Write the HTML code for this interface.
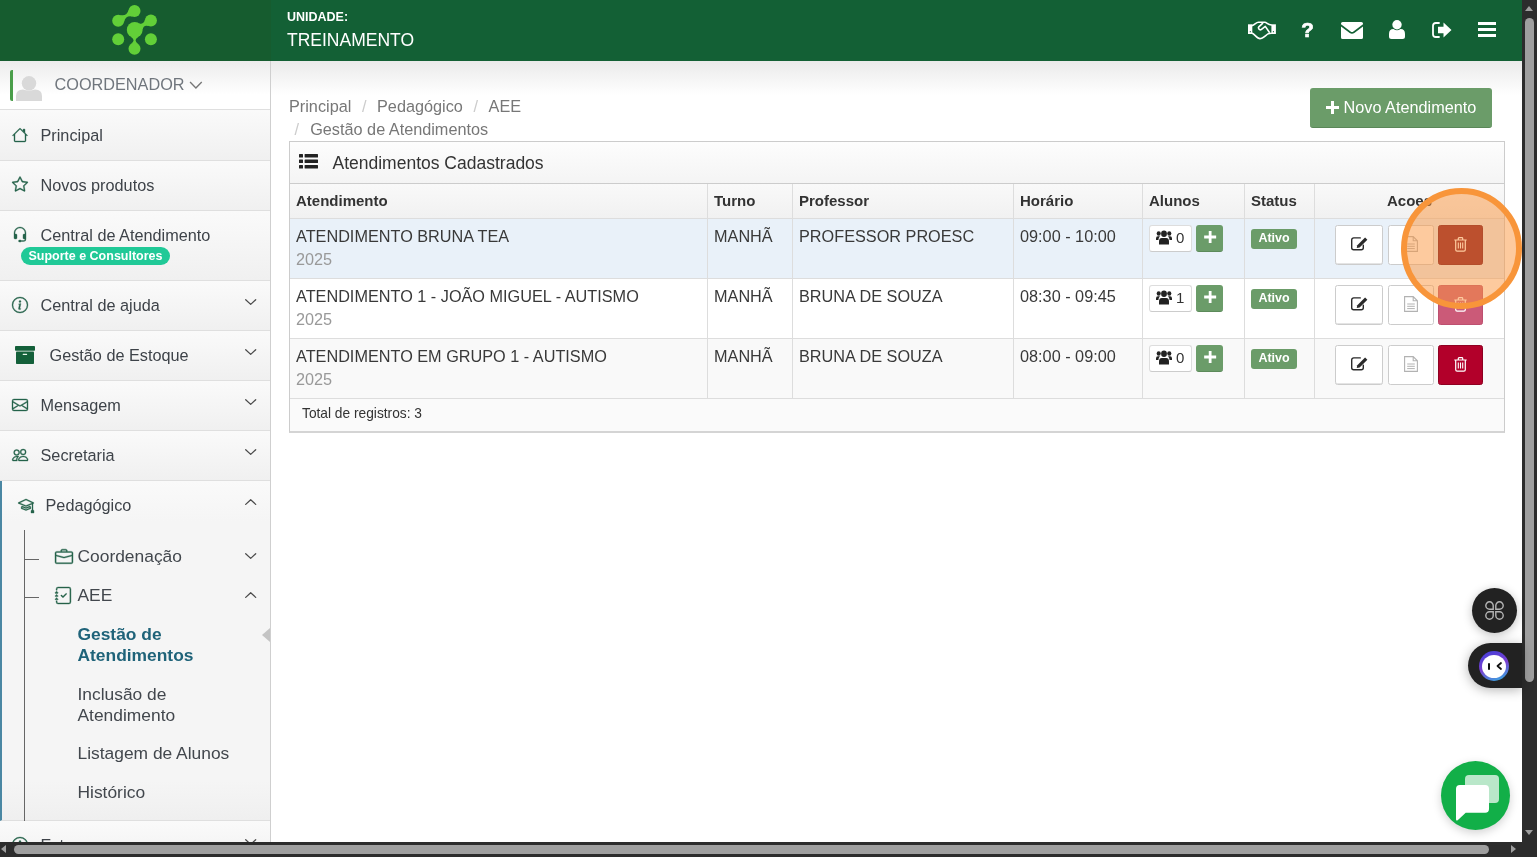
<!DOCTYPE html>
<html lang="pt-BR">
<head>
<meta charset="utf-8">
<title>Gestão de Atendimentos</title>
<style>
*{box-sizing:border-box;}
html,body{margin:0;padding:0;}
body{will-change:transform;width:1537px;height:857px;overflow:hidden;position:relative;background:#fff;font-family:"Liberation Sans",sans-serif;font-size:16.25px;color:#393939;}
.abs{position:absolute;}
svg{display:block;overflow:visible;}
/* header */
#hdr{position:absolute;left:0;top:0;width:1522px;height:61px;background:#136035;}
#logo{position:absolute;left:0;top:0;width:271px;height:61px;background:#165c2f;}
#unit{position:absolute;left:287px;top:10px;color:#fff;}
#unit .l1{font-size:12.5px;font-weight:bold;line-height:14px;}
#unit .l2{font-size:17.5px;line-height:20px;margin-top:6px;}
.hi{position:absolute;fill:#fff;}
/* sidebar */
#side{position:absolute;left:0;top:61px;width:271px;height:781px;background:#f5f5f5;border-right:1px solid #cfcfcf;overflow:hidden;}
.row{position:absolute;left:0;width:270px;border-bottom:1px solid #dfdfdf;background:linear-gradient(#fafafa,#f0f0f0);}
.row .t{position:absolute;left:40.5px;top:-1px;font-size:16.25px;line-height:50px;color:#3e4349;white-space:nowrap;}
.row .ic{position:absolute;left:12px;top:16px;width:17px;height:17px;}
.chev{position:absolute;left:245px;width:11px;height:7px;}
.sub{position:absolute;left:77.5px;font-size:17.4px;line-height:21px;color:#42474d;white-space:nowrap;}
/* main */
#main{position:absolute;left:271px;top:61px;width:1251px;height:781px;background:#fff;overflow:hidden;}
#topgrad{position:absolute;left:0;top:0;width:1251px;height:34px;background:linear-gradient(#eaeaea,#fff);}
.bc{position:absolute;font-size:16.25px;color:#777;white-space:nowrap;line-height:23px;}
.bc i{font-style:normal;color:#ccc;display:inline-block;width:25.7px;text-align:center;}

/* panel */
#panel{position:absolute;left:18px;top:80px;width:1216px;height:292px;border:1px solid #ccc;border-bottom:2px solid #d4d4d4;background:#fafafa;}
#phead{position:absolute;left:0;top:0;width:1214px;height:42px;background:linear-gradient(#fdfdfd,#f4f4f4);border-bottom:1px solid #ccc;}
#phead .tt{position:absolute;left:42.5px;top:1px;line-height:41px;font-size:17.5px;color:#333;}
table{position:absolute;left:0;top:42px;width:1214px;border-collapse:separate;border-spacing:0;table-layout:fixed;}
th{height:35px;padding:0 0 2px 6px;text-align:left;font-size:15px;font-weight:bold;color:#333;border-right:1px solid #ddd;border-bottom:1px solid #ddd;background:linear-gradient(#f9f9f9,#f1f1f1);}
td{height:60px;padding:6px 0 0 6px;vertical-align:top;font-size:16.25px;line-height:23px;color:#393939;border-right:1px solid #ddd;border-bottom:1px solid #ddd;white-space:nowrap;position:relative;}
th:last-child,td:last-child{border-right:none;}
tr.r1 td{background:#e9f1f9;}
tr.r2 td{background:#fff;}
tr.r3 td{background:#f9f9f9;}
td .yr{color:#999;}
.bcount{position:absolute;left:6px;top:6px;width:43px;height:27px;border:1px solid #ddd;border-bottom-color:#ccc;border-radius:3px;background:#fff;font-size:15px;line-height:25px;color:#333;}
.bcount span{position:absolute;left:26px;top:-1px;}
.bplus{position:absolute;left:53px;top:6px;width:27px;height:27px;border-radius:3px;background:#6b9c69;border-bottom:1px solid #5c8a5a;}
.ativo{position:absolute;left:6px;top:10px;width:46px;height:20px;border-radius:3px;background:#6b9c69;color:#fff;font-weight:bold;font-size:12.5px;line-height:19px;text-align:center;}
.ab{position:absolute;top:6px;height:40px;border-radius:2.5px;}
.ab.d{border:1px solid #ddd;border-bottom-color:#d6d6d6;}
.ab.w{background:#fff;border:1px solid #ccc;box-shadow:inset 0 -1px 0 #e4e4e4;}
#pfoot{position:absolute;left:0;top:257px;width:1214px;height:32px;font-size:13.75px;line-height:30px;color:#333;padding-left:12px;background:#fafafa;}
#novo{position:absolute;left:1039px;top:27px;width:182px;height:40px;background:#6b9c69;border-radius:3px;border-bottom:1px solid #5a8758;color:#fff;font-size:16.25px;line-height:39px;}
#novo span{position:absolute;left:33.5px;top:0;white-space:nowrap;}
#vsb{position:absolute;left:1522px;top:0;width:15px;height:857px;background:#2c2c2c;}
#hsb{position:absolute;left:0;top:842px;width:1537px;height:15px;background:#2c2c2c;}
</style>
</head>
<body>
<!-- HEADER -->
<div id="hdr"><div id="logo">
<svg class="abs" style="left:100px;top:0" width="70" height="61" viewBox="0 0 70 61"><g fill="#62cf38"><circle cx="34.5" cy="11.0" r="6.0"/><circle cx="18.2" cy="20.7" r="6.0"/><circle cx="50.9" cy="20.5" r="6.0"/><circle cx="34.7" cy="29.9" r="7.9"/><circle cx="18.2" cy="39.2" r="6.0"/><circle cx="50.9" cy="39.2" r="6.0"/><circle cx="34.5" cy="48.8" r="6.0"/><path d="M32.53 16.67 Q25.91 15.11 24.12 21.67 L20.17 15.03 Q26.79 16.59 28.58 10.03Z M38.80 23.14 Q43.82 25.06 44.97 19.56 L48.78 26.11 Q43.43 24.39 42.60 29.70Z M38.06 37.05 Q33.15 40.28 37.99 43.92 L31.12 43.85 Q36.03 40.32 31.19 36.98Z"/></g></svg>
</div>

<!-- header icons -->
<svg class="hi" style="left:1248px;top:21px" width="28" height="19" viewBox="0 0 28 19"><g fill="none" stroke="#fff" stroke-width="1.6" stroke-linejoin="round" stroke-linecap="round"><path d="M4.2 4.6 C6.5 4 8.2 1.3 10.4 1.3 H16.8 C18.8 1.3 19.8 4 23.4 4"/><path d="M4.2 12.3 C6.5 13 9 17.6 11.9 17.6 C14.5 17.6 17.5 14.5 20 12.9 C21 12.4 22 12.3 23.4 12.3"/><path d="M14.6 2.3 L10.8 5.9 C9.6 7.2 11.4 9.5 13.2 8.6 L17.3 5.4 L21.3 11.2"/></g><rect x="0" y="3.3" width="4.3" height="9.7"/><rect x="23.4" y="3.3" width="4.5" height="9.7"/><circle cx="2.3" cy="10.7" r=".6" fill="#136035"/><circle cx="25.4" cy="10.7" r=".6" fill="#136035"/></svg>
<div class="abs" style="left:1300px;top:17.5px;width:15px;text-align:center;color:#fff;font-weight:bold;font-size:20.5px;line-height:24px;-webkit-text-stroke:.7px #fff">?</div>
<svg class="hi" style="left:1341px;top:22px" width="22" height="17" viewBox="0 0 22 17"><path d="M0 1.6 q0-1.6 1.6-1.6 h18.8 q1.6 0 1.6 1.6 v.7 l-9.6 7.3 q-1.4 1-2.8 0 l-9.6-7.3z"/><path d="M0 4.6 l8.7 6.5 q2.3 1.5 4.6 0 l8.7-6.5 v10.8 q0 1.6-1.6 1.6 h-18.8 q-1.6 0-1.6-1.6z"/></svg>
<svg class="hi" style="left:1389px;top:20px" width="16" height="19" viewBox="0 0 16 19"><circle cx="8" cy="4.7" r="4.7"/><path d="M0 16.5 v-2.5 q0-5 4.5-5 q1.7 1.2 3.5 1.2 q1.8 0 3.5-1.2 q4.5 0 4.5 5 v2.5 q0 2.5-2.5 2.5 h-11 q-2.5 0-2.5-2.5z"/></svg>
<svg class="hi" style="left:1432px;top:22px" width="20" height="16" viewBox="0 0 20 16"><path d="M7 1 h-3.2 q-2.8 0-2.8 2.8 v8.4 q0 2.8 2.8 2.8 h3.2" fill="none" stroke="#fff" stroke-width="1.8" stroke-linecap="round"/><path d="M6 4.8 h5.5 v-4.2 l8 7.4 l-8 7.4 v-4.2 h-5.5z"/></svg>
<div class="abs" style="left:1478px;top:22px;width:18px;height:3px;background:#fff"></div>
<div class="abs" style="left:1478px;top:28px;width:18px;height:3px;background:#fff"></div>
<div class="abs" style="left:1478px;top:34px;width:18px;height:3px;background:#fff"></div>
<div id="unit"><div class="l1">UNIDADE:</div><div class="l2">TREINAMENTO</div></div>
</div>

<!-- SIDEBAR -->
<div id="side">
 <div class="row" style="top:0;height:49px;background:linear-gradient(#ececec,#fff 70%);">
  <div class="abs" style="left:10px;top:9px;width:3px;height:31px;background:#4a9e4a;border-radius:2px 0 0 2px"></div>
  <svg class="abs" style="left:16px;top:15px" width="26" height="25" viewBox="0 0 26 25"><circle cx="13" cy="7.3" r="7.2" fill="#d9d9d9"/><path d="M0 25 v-5 q0-6.5 7-6.5 q6 2 12 0 q7 0 7 6.5 v5z" fill="#d9d9d9"/></svg>
  <div class="abs" style="left:54.5px;top:0;line-height:47px;font-size:16.25px;color:#70767d">COORDENADOR</div>
  <svg class="chev" style="left:188.8px;top:19.5px;width:13.8px;height:8.5px" viewBox="0 0 13 8"><path d="M1 1 L6.5 6.5 L12 1" fill="none" stroke="#777" stroke-width="1.3"/></svg>
 </div>
 <div class="row" style="top:49px;height:51px"><svg class="abs" style="left:12px;top:17px" width="16" height="16" viewBox="0 0 16 16" fill="#25634a" stroke="#25634a" stroke-width=".35"><path fill-rule="evenodd" d="M2 13.5V7h1v6.5a.5.5 0 0 0 .5.5h9a.5.5 0 0 0 .5-.5V7h1v6.5a1.5 1.5 0 0 1-1.5 1.5h-9A1.5 1.5 0 0 1 2 13.5zm11-11V6l-2-2V2.5a.5.5 0 0 1 .5-.5h1a.5.5 0 0 1 .5.5z"/><path fill-rule="evenodd" d="M7.293 1.5a1 1 0 0 1 1.414 0l6.647 6.646a.5.5 0 0 1-.708.708L8 2.207 1.354 8.854a.5.5 0 1 1-.708-.708L7.293 1.5z"/></svg><div class="t" style="top:0">Principal</div></div>
 <div class="row" style="top:100px;height:50px"><svg class="abs" style="left:12px;top:15.2px" width="16" height="16" viewBox="0 0 16 16" fill="#25634a" stroke="#25634a" stroke-width=".35"><path d="M2.866 14.85c-.078.444.36.791.746.593l4.39-2.256 4.389 2.256c.386.198.824-.149.746-.592l-.83-4.73 3.522-3.356c.33-.314.16-.888-.282-.95l-4.898-.696L8.465.792a.513.513 0 0 0-.927 0L5.354 5.12l-4.898.696c-.441.062-.612.636-.283.95l3.523 3.356-.83 4.73zm4.905-2.767-3.686 1.894.694-3.957a.565.565 0 0 0-.163-.505L1.71 6.745l4.052-.576a.525.525 0 0 0 .393-.288L8 2.223l1.847 3.658a.525.525 0 0 0 .393.288l4.052.575-2.906 2.77a.565.565 0 0 0-.163.506l.694 3.957-3.686-1.894a.503.503 0 0 0-.461 0z"/></svg><div class="t">Novos produtos</div></div>
 <div class="row" style="top:150px;height:70px"><svg class="abs" style="left:11.5px;top:16px" width="16" height="16" viewBox="0 0 16 16" fill="#25634a" stroke="#25634a" stroke-width=".35"><path d="M8 1a5 5 0 0 0-5 5v1h1a1 1 0 0 1 1 1v3a1 1 0 0 1-1 1H3a1 1 0 0 1-1-1V6a6 6 0 1 1 12 0v6a2.5 2.5 0 0 1-2.5 2.5H9.366a1 1 0 0 1-.866.5h-1a1 1 0 1 1 0-2h1a1 1 0 0 1 .866.5H11.5A1.5 1.5 0 0 0 13 12h-1a1 1 0 0 1-1-1V8a1 1 0 0 1 1-1h1V6a5 5 0 0 0-5-5z"/></svg><div class="t">Central de Atendimento</div>
   <div class="abs" style="left:21px;top:36px;width:149px;height:18px;border-radius:9px;background:#20c997;color:#fff;font-weight:bold;font-size:12.5px;line-height:18px;text-align:center">Suporte e Consultores</div></div>
 <div class="row" style="top:220px;height:50px"><svg class="abs" style="left:12.3px;top:16px" width="16" height="16" viewBox="0 0 16 16" fill="#25634a" stroke="#25634a" stroke-width=".35"><path d="M8 15A7 7 0 1 1 8 1a7 7 0 0 1 0 14zm0 1A8 8 0 1 0 8 0a8 8 0 0 0 0 16z"/><path d="m8.93 6.588-2.29.287-.082.38.45.083c.294.07.352.176.288.469l-.738 3.468c-.194.897.105 1.319.808 1.319.545 0 1.178-.252 1.465-.598l.088-.416c-.2.176-.492.246-.686.246-.275 0-.375-.193-.304-.533L8.93 6.588zM9 4.5a1 1 0 1 1-2 0 1 1 0 0 1 2 0z"/></svg><div class="t">Central de ajuda</div><svg class="abs" style="left:244.6px;top:17.9px" width="11.4" height="6.1" viewBox="0 0 11.4 6.1"><path d="M.7 .7 L5.7 5.4 L10.7 .7" fill="none" stroke="#4a4a4a" stroke-width="1.25" stroke-linecap="round" stroke-linejoin="round"/></svg></div>
 <div class="row" style="top:270px;height:50px"><svg class="abs" style="left:15px;top:15px" width="20" height="18" viewBox="0 0 20 18"><rect x="0" y="0" width="20" height="4.7" rx=".8" fill="#14603a"/><rect x="1" y="5.6" width="18" height="12.4" rx=".8" fill="#14603a"/><rect x="7.7" y="7.8" width="4.4" height="1.2" rx=".5" fill="#e8f5ea"/></svg><div class="t" style="left:49.5px">Gestão de Estoque</div><svg class="abs" style="left:244.6px;top:17.9px" width="11.4" height="6.1" viewBox="0 0 11.4 6.1"><path d="M.7 .7 L5.7 5.4 L10.7 .7" fill="none" stroke="#4a4a4a" stroke-width="1.25" stroke-linecap="round" stroke-linejoin="round"/></svg></div>
 <div class="row" style="top:320px;height:50px"><svg class="abs" style="left:12.2px;top:16.2px" width="16" height="16" viewBox="0 0 16 16" fill="#25634a" stroke="#25634a" stroke-width=".35"><path d="M0 4a2 2 0 0 1 2-2h12a2 2 0 0 1 2 2v8a2 2 0 0 1-2 2H2a2 2 0 0 1-2-2V4Zm2-1a1 1 0 0 0-1 1v.217l7 4.2 7-4.2V4a1 1 0 0 0-1-1H2Zm13 2.383-4.708 2.825L15 11.105V5.383Zm-.034 6.876-5.64-3.471L8 9.583l-1.326-.795-5.64 3.47A1 1 0 0 0 2 13h12a1 1 0 0 0 .966-.741ZM1 11.105l4.708-2.897L1 5.383v5.722Z"/></svg><div class="t">Mensagem</div><svg class="abs" style="left:244.6px;top:17.9px" width="11.4" height="6.1" viewBox="0 0 11.4 6.1"><path d="M.7 .7 L5.7 5.4 L10.7 .7" fill="none" stroke="#4a4a4a" stroke-width="1.25" stroke-linecap="round" stroke-linejoin="round"/></svg></div>
 <div class="row" style="top:370px;height:50px"><svg class="abs" style="left:12.2px;top:15.7px" width="16.3" height="16" viewBox="0 0 16 16" fill="#25634a" stroke="#25634a" stroke-width=".35"><path d="M15 14s1 0 1-1-1-4-5-4-5 3-5 4 1 1 1 1h8zm-7.978-1A.261.261 0 0 1 7 12.996c.001-.264.167-1.03.76-1.72C8.312 10.629 9.282 10 11 10c1.717 0 2.687.63 3.24 1.276.593.69.758 1.457.76 1.72l-.008.002a.274.274 0 0 1-.014.002H7.022zM11 7a2 2 0 1 0 0-4 2 2 0 0 0 0 4zm3-2a3 3 0 1 1-6 0 3 3 0 0 1 6 0zM6.936 9.28a5.88 5.88 0 0 0-1.23-.247A7.35 7.35 0 0 0 5 9c-4 0-5 3-5 4 0 .667.333 1 1 1h4.216A2.238 2.238 0 0 1 5 13c0-1.01.377-2.042 1.09-2.904.243-.294.526-.569.846-.816zM4.92 10A5.493 5.493 0 0 0 4 13H1c0-.26.164-1.03.76-1.724.545-.636 1.492-1.256 3.16-1.275zM1.5 5.5a3 3 0 1 1 6 0 3 3 0 0 1-6 0zm3-2a2 2 0 1 0 0 4 2 2 0 0 0 0-4z"/></svg><div class="t">Secretaria</div><svg class="abs" style="left:244.6px;top:17.9px" width="11.4" height="6.1" viewBox="0 0 11.4 6.1"><path d="M.7 .7 L5.7 5.4 L10.7 .7" fill="none" stroke="#4a4a4a" stroke-width="1.25" stroke-linecap="round" stroke-linejoin="round"/></svg></div>
 <div class="row" style="top:420px;height:340px;background:linear-gradient(#fafafa,#f5f5f5 40px,#f5f5f5 300px,#efefef);border-left:2px solid #4a87a3">
   <svg class="abs" style="left:15.8px;top:16.2px" width="16" height="16" viewBox="0 0 16 16" fill="#25634a" stroke="#25634a" stroke-width=".35"><path d="M8.211 2.047a.5.5 0 0 0-.422 0l-7.5 3.5a.5.5 0 0 0 .025.917l7.5 3a.5.5 0 0 0 .372 0L14 7.14V13a1 1 0 0 0-1 1v2h3v-2a1 1 0 0 0-1-1V6.739l.686-.275a.5.5 0 0 0 .025-.917l-7.5-3.5ZM8 8.460 1.758 5.965 8 3.052l6.242 2.913L8 8.460Z"/><path d="M4.176 9.032a.5.5 0 0 0-.656.327l-.5 1.7a.5.5 0 0 0 .294.605l4.5 1.8a.5.5 0 0 0 .372 0l4.5-1.8a.5.5 0 0 0 .294-.605l-.5-1.7a.5.5 0 0 0-.656-.327L8 10.466 4.176 9.032Zm-.068 1.873.22-.748 3.496 1.311a.5.5 0 0 0 .352 0l3.496-1.311.22.748L8 12.460l-3.892-1.556Z"/></svg><div class="t" style="left:43.5px">Pedagógico</div><svg class="abs" style="left:242.6px;top:17.9px" width="11.4" height="6.1" viewBox="0 0 11.4 6.1"><path d="M.7 5.4 L5.7 .7 L10.7 5.400" fill="none" stroke="#4a4a4a" stroke-width="1.25" stroke-linecap="round" stroke-linejoin="round"/></svg>
   <div class="abs" style="left:22px;top:49px;width:1px;height:291px;background:#666"></div>
   <div class="abs" style="left:22px;top:78px;width:15px;height:1px;background:#666"></div>
   <div class="abs" style="left:22px;top:116px;width:15px;height:1px;background:#666"></div>
   <svg class="abs" style="left:52.5px;top:66.5px" width="18" height="18" viewBox="0 0 16 16" fill="#25634a" stroke="#25634a" stroke-width=".35"><path d="M6.5 1A1.5 1.5 0 0 0 5 2.5V3H1.5A1.5 1.5 0 0 0 0 4.5v8A1.5 1.5 0 0 0 1.5 14h13a1.5 1.5 0 0 0 1.5-1.5v-8A1.5 1.5 0 0 0 14.5 3H11v-.5A1.5 1.5 0 0 0 9.5 1h-3zm0 1h3a.5.5 0 0 1 .5.5V3H6v-.5a.5.5 0 0 1 .5-.5zm1.886 6.914L15 7.151V12.5a.5.5 0 0 1-.5.5h-13a.5.5 0 0 1-.5-.5V7.150l6.614 1.764a1.5 1.5 0 0 0 .772 0zM1.5 4h13a.5.5 0 0 1 .5.5v1.616L8.129 7.948a.5.5 0 0 1-.258 0L1 6.116V4.5a.5.5 0 0 1 .5-.5z"/></svg><div class="sub" style="left:75.5px;top:65px">Coordenação</div><svg class="abs" style="left:242.6px;top:72.0px" width="11.4" height="6.1" viewBox="0 0 11.4 6.1"><path d="M.7 .7 L5.7 5.4 L10.7 .7" fill="none" stroke="#4a4a4a" stroke-width="1.25" stroke-linecap="round" stroke-linejoin="round"/></svg>
   <svg class="abs" style="left:52.5px;top:106px" width="17" height="17" viewBox="0 0 16 16" fill="#25634a" stroke="#25634a" stroke-width=".35"><path fill-rule="evenodd" d="M10.854 6.146a.5.5 0 0 1 0 .708l-3 3a.5.5 0 0 1-.708 0l-1.5-1.5a.5.5 0 1 1 .708-.708L7.5 8.793l2.646-2.647a.5.5 0 0 1 .708 0z"/><path d="M3 0h10a2 2 0 0 1 2 2v12a2 2 0 0 1-2 2H3a2 2 0 0 1-2-2v-1h1v1a1 1 0 0 0 1 1h10a1 1 0 0 0 1-1V2a1 1 0 0 0-1-1H3a1 1 0 0 0-1 1v1H1V2a2 2 0 0 1 2-2z"/><path d="M1 5v-.5a.5.5 0 0 1 1 0V5h.5a.5.5 0 0 1 0 1h-2a.5.5 0 0 1 0-1H1zm0 3v-.5a.5.5 0 0 1 1 0V8h.5a.5.5 0 0 1 0 1h-2a.5.5 0 0 1 0-1H1zm0 3v-.5a.5.5 0 0 1 1 0v.5h.5a.5.5 0 0 1 0 1h-2a.5.5 0 0 1 0-1H1z"/></svg><div class="sub" style="left:75.5px;top:104px">AEE</div><svg class="abs" style="left:242.6px;top:111.2px" width="11.4" height="6.1" viewBox="0 0 11.4 6.1"><path d="M.7 5.4 L5.7 .7 L10.7 5.400" fill="none" stroke="#4a4a4a" stroke-width="1.25" stroke-linecap="round" stroke-linejoin="round"/></svg>
   <div class="sub" style="left:75.5px;top:143px;font-weight:bold;color:#1f6379">Gestão de<br>Atendimentos</div>
   <div class="sub" style="left:75.5px;top:203px">Inclusão de<br>Atendimento</div>
   <div class="sub" style="left:75.5px;top:261.5px">Listagem de Alunos</div>
   <div class="sub" style="left:75.5px;top:301px">Histórico</div>
   <div class="abs" style="left:260px;top:147px;width:0;height:0;border-top:7.5px solid transparent;border-bottom:7.5px solid transparent;border-right:8px solid #c4c4c4"></div>
 </div>
 <div class="row" style="top:760px;height:50px"><svg class="abs" style="left:12.3px;top:16px" width="16" height="16" viewBox="0 0 16 16" fill="#25634a" stroke="#25634a" stroke-width=".35"><path d="M8 15A7 7 0 1 1 8 1a7 7 0 0 1 0 14zm0 1A8 8 0 1 0 8 0a8 8 0 0 0 0 16z"/><path d="m8.93 6.588-2.29.287-.082.38.45.083c.294.07.352.176.288.469l-.738 3.468c-.194.897.105 1.319.808 1.319.545 0 1.178-.252 1.465-.598l.088-.416c-.2.176-.492.246-.686.246-.275 0-.375-.193-.304-.533L8.93 6.588zM9 4.5a1 1 0 1 1-2 0 1 1 0 0 1 2 0z"/></svg><div class="t">Extras</div><svg class="abs" style="left:244.6px;top:17.9px" width="11.4" height="6.1" viewBox="0 0 11.4 6.1"><path d="M.7 .7 L5.7 5.4 L10.7 .7" fill="none" stroke="#4a4a4a" stroke-width="1.25" stroke-linecap="round" stroke-linejoin="round"/></svg></div>
</div>

<!-- MAIN -->
<div id="main">
 <div id="topgrad"></div>
 <div class="bc" style="left:18px;top:34px">Principal<i>/</i>Pedagógico<i>/</i>AEE</div>
 <div class="bc" style="left:23.5px;top:57px"><i style="width:15.7px;text-align:left">/</i>Gestão de Atendimentos</div>
<div id="panel">
<div id="phead"><svg class="abs" style="left:9px;top:12px" width="19" height="15" viewBox="0 0 19 15"><g fill="#222"><rect x="0" y="0" width="4" height="3.6" rx=".5"/><rect x="5.6" y="0" width="13.4" height="3.6" rx=".5"/><rect x="0" y="5.5" width="4" height="3.6" rx=".5"/><rect x="5.6" y="5.5" width="13.4" height="3.6" rx=".5"/><rect x="0" y="11" width="4" height="3.6" rx=".5"/><rect x="5.6" y="11" width="13.4" height="3.6" rx=".5"/></g></svg><div class="tt">Atendimentos Cadastrados</div></div>
<table><colgroup><col style="width:418px"><col style="width:85px"><col style="width:221px"><col style="width:129px"><col style="width:102px"><col style="width:70px"><col style="width:189px"></colgroup>
<tr><th>Atendimento</th><th>Turno</th><th>Professor</th><th>Horário</th><th>Alunos</th><th>Status</th><th style="text-align:center;padding:0 0 2px 0">Acoes</th></tr>
<tr class="r1"><td>ATENDIMENTO BRUNA TEA<br><span class="yr">2025</span></td><td>MANHÃ</td><td>PROFESSOR PROESC</td><td>09:00 - 10:00</td>
<td><div class="bcount"><svg class="abs" style="left:6px;top:4.3px" width="16" height="14.6" viewBox="0 0 17 14" preserveAspectRatio="none"><g fill="#222"><circle cx="8.5" cy="3.6" r="3.1"/><path d="M3.2 14 v-3.2 q0-3.2 3-3.2 h4.6 q3 0 3 3.2 v3.2z"/><circle cx="2.9" cy="3.4" r="2.2"/><circle cx="14.1" cy="3.4" r="2.2"/><path d="M0 9.6 v-1.5 q0-2.2 2-2.2 h2.2 q-1.6 1.3-1.6 3.7z"/><path d="M17 9.6 v-1.5 q0-2.2-2-2.2 h-2.2 q1.6 1.3 1.6 3.7z"/></g></svg><span>0</span></div><div class="bplus"><svg class="abs" style="left:7.5px;top:5.7px" width="12.3" height="12" viewBox="0 0 13 13"><path d="M5 0h3v5h5v3h-5v5h-3v-5h-5v-3h5z" fill="#fff"/></svg></div></td>
<td><div class="ativo">Ativo</div></td>
<td><div class="ab w" style="left:20px;width:48px"><svg class="abs" style="left:15px;top:11px" width="17" height="14" viewBox="0 0 17 14"><path d="M9.3 .9 H2.7 a2 2 0 0 0-2 2 V10.8 a2 2 0 0 0 2 2 H10.3 a2 2 0 0 0 2-2 V8.3" fill="none" stroke="#2a2a2a" stroke-width="1.4" stroke-linecap="round"/><path d="M5.7 11.1 L6.3 8.2 L14.1 .4 L16.4 2.7 L8.6 10.5Z" fill="#2a2a2a"/></svg></div><div class="ab w d" style="left:73px;width:46px;box-shadow:none"><svg class="abs" style="left:15px;top:10px" width="14" height="16" viewBox="0 0 14 16"><path d="M.6 .6 h8.6 l4.2 4.2 v10.6 h-12.8z M9.2 .6 v4.2 h4.2" fill="none" stroke="#b2b2b2" stroke-width="1.1"/><path d="M3.2 8 h7.6 M3.2 10.3 h7.6 M3.2 12.6 h7.6" stroke="#b2b2b2" stroke-width="1"/></svg></div><div class="ab" style="left:123px;width:45px;background:#7d0a1e;border:1px solid #6a0518"><svg class="abs" style="left:15px;top:11px" width="13" height="15" viewBox="0 0 13 15"><path d="M0.3 3 h12.4 M4.3 3 v-1.6 q0-0.8 0.8-0.8 h2.8 q0.8 0 0.8 0.8 v1.6 M1.7 3.2 v9.6 q0 1.4 1.4 1.4 h6.8 q1.4 0 1.4-1.4 v-9.6" fill="none" stroke="#fff" stroke-width="1.2"/><path d="M4.3 5.5 v6 M6.5 5.5 v6 M8.7 5.5 v6" stroke="#fff" stroke-width="1.1"/></svg></div></td></tr><tr class="r2"><td>ATENDIMENTO 1 - JOÃO MIGUEL - AUTISMO<br><span class="yr">2025</span></td><td>MANHÃ</td><td>BRUNA DE SOUZA</td><td>08:30 - 09:45</td>
<td><div class="bcount"><svg class="abs" style="left:6px;top:4.3px" width="16" height="14.6" viewBox="0 0 17 14" preserveAspectRatio="none"><g fill="#222"><circle cx="8.5" cy="3.6" r="3.1"/><path d="M3.2 14 v-3.2 q0-3.2 3-3.2 h4.6 q3 0 3 3.2 v3.2z"/><circle cx="2.9" cy="3.4" r="2.2"/><circle cx="14.1" cy="3.4" r="2.2"/><path d="M0 9.6 v-1.5 q0-2.2 2-2.2 h2.2 q-1.6 1.3-1.6 3.7z"/><path d="M17 9.6 v-1.5 q0-2.2-2-2.2 h-2.2 q1.6 1.3 1.6 3.7z"/></g></svg><span>1</span></div><div class="bplus"><svg class="abs" style="left:7.5px;top:5.7px" width="12.3" height="12" viewBox="0 0 13 13"><path d="M5 0h3v5h5v3h-5v5h-3v-5h-5v-3h5z" fill="#fff"/></svg></div></td>
<td><div class="ativo">Ativo</div></td>
<td><div class="ab w" style="left:20px;width:48px"><svg class="abs" style="left:15px;top:11px" width="17" height="14" viewBox="0 0 17 14"><path d="M9.3 .9 H2.7 a2 2 0 0 0-2 2 V10.8 a2 2 0 0 0 2 2 H10.3 a2 2 0 0 0 2-2 V8.3" fill="none" stroke="#2a2a2a" stroke-width="1.4" stroke-linecap="round"/><path d="M5.7 11.1 L6.3 8.2 L14.1 .4 L16.4 2.7 L8.6 10.5Z" fill="#2a2a2a"/></svg></div><div class="ab w d" style="left:73px;width:46px;box-shadow:none"><svg class="abs" style="left:15px;top:10px" width="14" height="16" viewBox="0 0 14 16"><path d="M.6 .6 h8.6 l4.2 4.2 v10.6 h-12.8z M9.2 .6 v4.2 h4.2" fill="none" stroke="#b2b2b2" stroke-width="1.1"/><path d="M3.2 8 h7.6 M3.2 10.3 h7.6 M3.2 12.6 h7.6" stroke="#b2b2b2" stroke-width="1"/></svg></div><div class="ab" style="left:123px;width:45px;background:#cb5a78;border:1px solid #bd5070"><svg class="abs" style="left:15px;top:11px" width="13" height="15" viewBox="0 0 13 15"><path d="M0.3 3 h12.4 M4.3 3 v-1.6 q0-0.8 0.8-0.8 h2.8 q0.8 0 0.8 0.8 v1.6 M1.7 3.2 v9.6 q0 1.4 1.4 1.4 h6.8 q1.4 0 1.4-1.4 v-9.6" fill="none" stroke="#fff" stroke-width="1.2"/><path d="M4.3 5.5 v6 M6.5 5.5 v6 M8.7 5.5 v6" stroke="#fff" stroke-width="1.1"/></svg></div></td></tr><tr class="r3"><td>ATENDIMENTO EM GRUPO 1 - AUTISMO<br><span class="yr">2025</span></td><td>MANHÃ</td><td>BRUNA DE SOUZA</td><td>08:00 - 09:00</td>
<td><div class="bcount"><svg class="abs" style="left:6px;top:4.3px" width="16" height="14.6" viewBox="0 0 17 14" preserveAspectRatio="none"><g fill="#222"><circle cx="8.5" cy="3.6" r="3.1"/><path d="M3.2 14 v-3.2 q0-3.2 3-3.2 h4.6 q3 0 3 3.2 v3.2z"/><circle cx="2.9" cy="3.4" r="2.2"/><circle cx="14.1" cy="3.4" r="2.2"/><path d="M0 9.6 v-1.5 q0-2.2 2-2.2 h2.2 q-1.6 1.3-1.6 3.7z"/><path d="M17 9.6 v-1.5 q0-2.2-2-2.2 h-2.2 q1.6 1.3 1.6 3.7z"/></g></svg><span>0</span></div><div class="bplus"><svg class="abs" style="left:7.5px;top:5.7px" width="12.3" height="12" viewBox="0 0 13 13"><path d="M5 0h3v5h5v3h-5v5h-3v-5h-5v-3h5z" fill="#fff"/></svg></div></td>
<td><div class="ativo">Ativo</div></td>
<td><div class="ab w" style="left:20px;width:48px"><svg class="abs" style="left:15px;top:11px" width="17" height="14" viewBox="0 0 17 14"><path d="M9.3 .9 H2.7 a2 2 0 0 0-2 2 V10.8 a2 2 0 0 0 2 2 H10.3 a2 2 0 0 0 2-2 V8.3" fill="none" stroke="#2a2a2a" stroke-width="1.4" stroke-linecap="round"/><path d="M5.7 11.1 L6.3 8.2 L14.1 .4 L16.4 2.7 L8.6 10.5Z" fill="#2a2a2a"/></svg></div><div class="ab w d" style="left:73px;width:46px;box-shadow:none"><svg class="abs" style="left:15px;top:10px" width="14" height="16" viewBox="0 0 14 16"><path d="M.6 .6 h8.6 l4.2 4.2 v10.6 h-12.8z M9.2 .6 v4.2 h4.2" fill="none" stroke="#b2b2b2" stroke-width="1.1"/><path d="M3.2 8 h7.6 M3.2 10.3 h7.6 M3.2 12.6 h7.6" stroke="#b2b2b2" stroke-width="1"/></svg></div><div class="ab" style="left:123px;width:45px;background:#b2002a;border:1px solid #8e0021"><svg class="abs" style="left:15px;top:11px" width="13" height="15" viewBox="0 0 13 15"><path d="M0.3 3 h12.4 M4.3 3 v-1.6 q0-0.8 0.8-0.8 h2.8 q0.8 0 0.8 0.8 v1.6 M1.7 3.2 v9.6 q0 1.4 1.4 1.4 h6.8 q1.4 0 1.4-1.4 v-9.6" fill="none" stroke="#fff" stroke-width="1.2"/><path d="M4.3 5.5 v6 M6.5 5.5 v6 M8.7 5.5 v6" stroke="#fff" stroke-width="1.1"/></svg></div></td></tr>
</table>
<div id="pfoot">Total de registros: 3</div>
</div>
<div id="novo"><svg class="abs" style="left:16px;top:12.5px" width="13" height="13" viewBox="0 0 13 13"><path d="M5 0h3v5h5v3h-5v5h-3v-5h-5v-3h5z" fill="#fff"/></svg><span>Novo Atendimento</span></div>
<div class="abs" style="left:1130px;top:127px;width:121px;height:121px;border-radius:50%;border:6px solid #f8953a;background:rgba(252,150,62,.5)"></div>
</div>

<div id="vsb">
 <div class="abs" style="left:3px;top:6px;width:0;height:0;border-left:4.5px solid transparent;border-right:4.5px solid transparent;border-bottom:5px solid #9f9f9f"></div>
 <div class="abs" style="left:3px;top:18px;width:9px;height:664px;border-radius:4.5px;background:#9f9f9f"></div>
 <div class="abs" style="left:3px;top:830px;width:0;height:0;border-left:4.5px solid transparent;border-right:4.5px solid transparent;border-top:5px solid #9f9f9f"></div>
</div>
<div id="hsb">
 <div class="abs" style="left:1px;top:3px;width:0;height:0;border-top:4.5px solid transparent;border-bottom:4.5px solid transparent;border-right:5px solid #9f9f9f"></div>
 <div class="abs" style="left:14px;top:3px;width:1475px;height:9px;border-radius:4.5px;background:#9f9f9f"></div>
 <div class="abs" style="left:1511px;top:3px;width:0;height:0;border-top:4.5px solid transparent;border-bottom:4.5px solid transparent;border-left:5px solid #9f9f9f"></div>
</div>
<!-- floating widgets -->
<div class="abs" style="left:1472px;top:588px;width:45px;height:45px;border-radius:50%;background:#222;box-shadow:0 2px 10px rgba(0,0,0,.25)">
 <svg class="abs" style="left:13px;top:13px" width="19" height="19" viewBox="0 0 19 19"><g fill="none" stroke="#b5b5b5" stroke-width="1.4"><path d="M8.2 8.2 h-3.7 a3.7 3.7 0 1 1 3.7-3.7z"/><path d="M10.8 8.2 h3.7 a3.7 3.7 0 1 0-3.7-3.7z"/><path d="M8.2 10.8 h-3.7 a3.7 3.7 0 1 0 3.7 3.7z"/><path d="M10.8 10.8 h3.7 a3.7 3.7 0 1 1-3.7 3.7z"/></g></svg>
</div>
<div class="abs" style="left:1468px;top:643px;width:54px;height:45px;border-radius:22.5px 0 0 22.5px;background:#222;box-shadow:0 2px 12px rgba(0,0,0,.3)">
 <div class="abs" style="left:11px;top:7.5px;width:30px;height:30px;border-radius:50%;background:linear-gradient(160deg,#4a3fd8 10%,#7a3fd0 50%,#3ea0e0 90%)"></div>
 <div class="abs" style="left:14px;top:11.5px;width:24px;height:23px;border-radius:50%;background:#fff"></div>
 <div class="abs" style="left:19.5px;top:19.5px;width:2.5px;height:7px;border-radius:1.2px;background:#111"></div>
 <svg class="abs" style="left:28px;top:19px" width="6" height="8" viewBox="0 0 6 8"><path d="M5 1 L1.5 4 L5 7" fill="none" stroke="#111" stroke-width="1.8" stroke-linecap="round" stroke-linejoin="round"/></svg>
</div>
<div class="abs" style="left:1441px;top:761px;width:69px;height:69px;border-radius:50%;background:#12af48;box-shadow:0 3px 10px rgba(0,0,0,.18)">
 <div class="abs" style="left:24px;top:14px;width:34px;height:28px;border-radius:4px;background:#b9e7c9"></div>
 <svg class="abs" style="left:14.5px;top:24px" width="34" height="37" viewBox="0 0 35 38"><path d="M0 4 q0-4 4-4 h26 q4 0 4 4 v20.5 q0 4-4 4 h-20 l-8 7.5 q-2 1.5-2-.8z" fill="#fff"/></svg>
</div>
</body>
</html>
